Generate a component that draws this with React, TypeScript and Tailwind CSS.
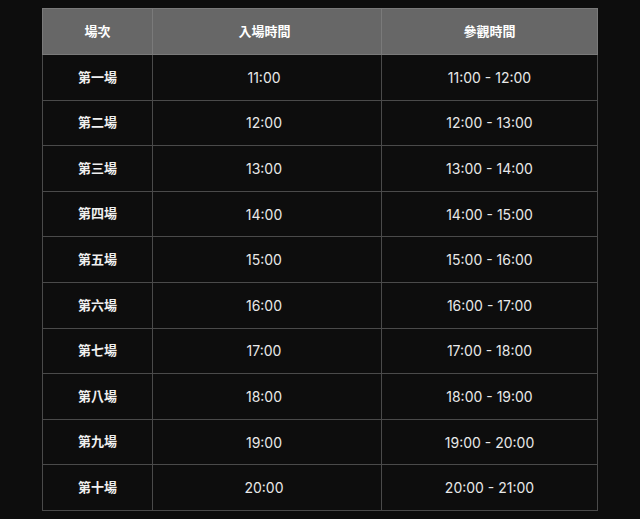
const rows = [
  ["第一場", "11:00", "11:00 - 12:00"],
  ["第二場", "12:00", "12:00 - 13:00"],
  ["第三場", "13:00", "13:00 - 14:00"],
  ["第四場", "14:00", "14:00 - 15:00"],
  ["第五場", "15:00", "15:00 - 16:00"],
  ["第六場", "16:00", "16:00 - 17:00"],
  ["第七場", "17:00", "17:00 - 18:00"],
  ["第八場", "18:00", "18:00 - 19:00"],
  ["第九場", "19:00", "19:00 - 20:00"],
  ["第十場", "20:00", "20:00 - 21:00"],
];

export default function App() {
  return (
    <div
      className="w-[640px] h-[519px] bg-[#0d0d0d] pt-[8px] pl-[42px] overflow-hidden"
      style={{ fontFamily: '"Inter", "Noto Sans CJK TC", sans-serif' }}
    >
      <table className="w-[555px] border-collapse border border-[#5a5a5a] table-fixed">
        <colgroup>
          <col className="w-[110px]" />
          <col className="w-[229px]" />
          <col className="w-[216px]" />
        </colgroup>
        <thead>
          <tr className="bg-[#676767] h-[46px]">
            <th className="border border-[#7a7a7a] text-[13px] font-bold text-white text-center p-0">場次</th>
            <th className="border border-[#7a7a7a] text-[13px] font-bold text-white text-center p-0 pr-[5px]">入場時間</th>
            <th className="border border-[#7a7a7a] text-[13px] font-bold text-white text-center p-0">參觀時間</th>
          </tr>
        </thead>
        <tbody>
          {rows.map((r) => (
            <tr key={r[0]} className="h-[45.6px]">
              <td className="border border-[#4a4a4a] text-[13px] font-bold text-[#f0f0f0] text-center p-0">{r[0]}</td>
              <td className="border border-[#4a4a4a] text-[14px] text-[#e8e8e8] text-center p-0 pr-[6px]">{r[1]}</td>
              <td className="border border-[#4a4a4a] text-[14px] text-[#e8e8e8] text-center p-0">{r[2]}</td>
            </tr>
          ))}
        </tbody>
      </table>
    </div>
  );
}
